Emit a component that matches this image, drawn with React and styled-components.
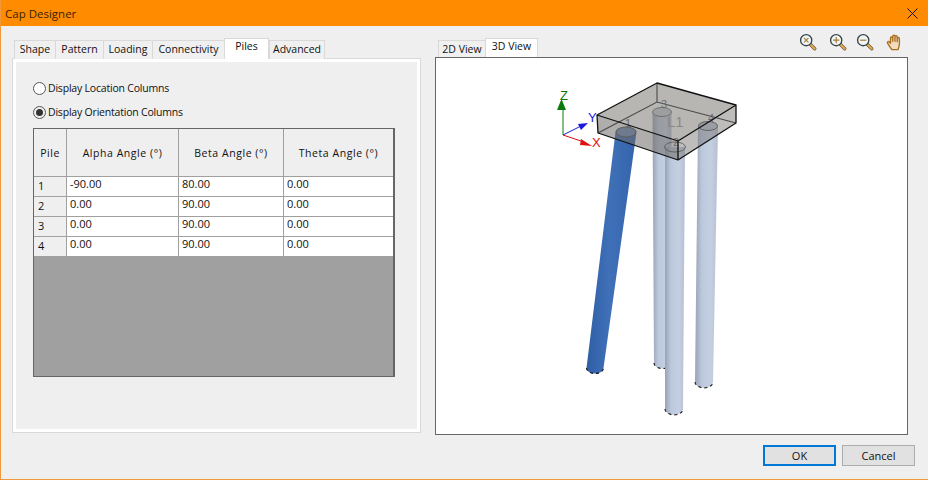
import React from "react";
import styled, { createGlobalStyle } from "styled-components";

const Global = createGlobalStyle`
  html, body { margin: 0; padding: 0; background: #efefef; }
  body { font-family: "Open Sans", "Noto Sans", "Liberation Sans", sans-serif; font-size: 11px; color: #111; }
`;

const Win = styled.div`
  width: 928px; height: 480px; box-sizing: border-box; overflow: hidden;
  background: #efefef;
  border: 1px solid #f0983a; border-top: 0; border-right: 0;
  display: flex; flex-direction: column;
`;
const TitleBar = styled.header`
  height: 26px; flex: none; margin-left: -1px; background: #ff8c00;
  display: flex; align-items: center; justify-content: space-between;
  padding: 0 10px 0 5px; font-size: 11.5px; color: #3a2200;
`;
const CloseButton = styled.svg`width: 11px; height: 11px; display: block;`;
const Body = styled.div`
  flex: 1; display: flex; gap: 14px; padding: 11px 20px 0 11px; min-height: 0;
`;
const LeftCol = styled.section`width: 409px; flex: none; display: flex; flex-direction: column;`;
const RightCol = styled.section`width: 473px; flex: none; display: flex; flex-direction: column;`;
const TabRow = styled.div`
  height: 21px; flex: none; display: flex; align-items: flex-end; padding-left: ${p => p.$pad}px;
`;
const Tab = styled.div`
  width: ${p => p.$w}px; box-sizing: border-box; flex: none; text-align: center; font-size: 10.5px;
  height: ${p => p.$active ? 21 : 19}px; line-height: ${p => p.$active ? 15 : 16}px;
  background: ${p => p.$active ? "#fff" : "#f0f0f0"};
  border: 1px solid #d9d9d9; border-bottom: 0;
  ${p => p.$active ? "" : "border-right-width: 0;"}
  &:last-child { border-right-width: 1px; }
  margin-bottom: -1px; position: relative; z-index: ${p => p.$active ? 2 : 1};
`;
const Panel = styled.div`
  width: 409px; height: 375px; box-sizing: border-box; flex: none;
  border: 1px solid #d9d9d9; outline: 3px solid #fff; outline-offset: -4px;
  padding: 17px 12px 0 20px; background: #efefef;
`;
const RadioRow = styled.label`
  display: flex; align-items: center; gap: 2px; height: 24px; line-height: 24px;
  font-size: 10.5px; letter-spacing: -.2px;
`;
const RadioDot = styled.span`
  width: 13px; height: 13px; border-radius: 50%; box-sizing: border-box; flex: none;
  border: 1px solid #555; background: ${p => p.$on ? "#efefef" : "#fff"};
  display: flex; align-items: center; justify-content: center;
  &::after { content: ""; width: 7px; height: 7px; border-radius: 50%; background: ${p => p.$on ? "#333" : "transparent"}; }
`;
const Grid = styled.div`
  margin-top: 4px; width: 362px; height: 249px; box-sizing: border-box;
  border: 1px solid #666; border-right-width: 2px; background: #a0a0a0;
`;
const GRow = styled.div`
  display: grid; grid-template-columns: 33px 112px 105px 109px; height: ${p => p.$h}px; box-sizing: border-box;
  border-bottom: 1px solid #a0a0a0;
`;
const HCell = styled.div`
  background: #efefef; border-right: 1px solid #a0a0a0;
  display: flex; align-items: center; justify-content: center; font-size: 10.5px; letter-spacing: .55px;
  &:last-child { border-right: 0; }
`;
const IdCell = styled.div`
  background: #efefef; border-right: 1px solid #a0a0a0; padding-left: 4px; line-height: 17px;
`;
const Cell = styled.div`
  background: #fff; border-right: 1px solid #a0a0a0; padding-left: 3px; line-height: 14px;
  &:last-child { border-right: 0; }
`;
const ViewHead = styled.div`display: flex; justify-content: space-between; flex: none; height: 21px;`;
const Tools = styled.div`display: flex; align-items: flex-start; margin-top: -4px; padding-right: 4px;`;
const ToolIcon = styled.svg`width: 18px; height: 18px; display: block; margin-left: ${p => p.$ml}px;`;
const View = styled.div`
  width: 473px; height: 378px; box-sizing: border-box; flex: none; border: 1px solid #666; background: #fff;
  position: relative; z-index: 3; margin-top: -1px;
`;
const Scene = styled.svg`display: block; width: 471px; height: 376px;`;
const Footer = styled.footer`
  flex: none; display: flex; justify-content: flex-end; gap: 6px; padding: 0 13px 13px 0; height: 34px; box-sizing: border-box; align-items: flex-start; margin-top: 11px;
`;
const Btn = styled.button`
  width: 73px; height: 21px; box-sizing: border-box; background: #e1e1e1; padding: 0;
  border: ${p => p.$primary ? "2px solid #0078d7" : "1px solid #adadad"};
  font: inherit; color: #111; font-size: 11px;
`;

const rows = [["1","-90.00","80.00","0.00"],["2","0.00","90.00","0.00"],["3","0.00","90.00","0.00"],["4","0.00","90.00","0.00"]];

const Magnifier = ({ kind, ml }) => (
  <ToolIcon viewBox="0 0 20 20" $ml={ml}>
    <line x1="12.5" y1="12.5" x2="17.5" y2="17.5" stroke="#6b5a3a" strokeWidth="3.6" strokeLinecap="round" />
    <line x1="12.5" y1="12.5" x2="17.5" y2="17.5" stroke="#e0a850" strokeWidth="2.2" strokeLinecap="round" />
    <circle cx="8" cy="8" r="6.2" fill="#eef6f6" stroke="#38424a" strokeWidth="1.5" />
    {kind === "plus" && <path d="M8 4.5v7M4.5 8h7" stroke="#a87a30" strokeWidth="1.3" />}
    {kind === "minus" && <path d="M4.5 8h7" stroke="#a87a30" strokeWidth="1.3" />}
    {kind === "x" && <path d="M5.5 5.5l5 5M10.500 5.500l-5 5" stroke="#a87a30" strokeWidth="1.2" />}
  </ToolIcon>
);

const Hand = () => (
  <ToolIcon viewBox="0 0 20 20" $ml={12}>
    <path d="M5 16.500C4 14.500 1.500 11.500 1.500 10.500c0-1.200 1.500-1.300 2.300-.5L5 11.300V5.500c0-1.500 2-1.500 2.200 0L7.500 9V3.500c0-1.600 2.300-1.600 2.400 0L10 9V4c0-1.500 2.300-1.500 2.400 0l.1 5.500V6c0-1.400 2.200-1.400 2.300 0 .3 4 .4 7.500-.8 10.500-.3.800-.6 2-.6 2H6.500c-.3-.8-1-1.300-1.500-2z" fill="#f2dcc0" stroke="#a8701f" strokeWidth="1.500" strokeLinejoin="round" />
    <path d="M7.500 8.500v2M10 8.500v2M12.500 8.500v2" stroke="#c49454" strokeWidth=".8" />
  </ToolIcon>
);

const Pile = ({ x1, y1, x2, y2, w1, w2, grad, cap }) => {
  const a = w1 / 2;
  const b = w2 / 2;
  const d = `M${x1 - a} ${y1} L${x2 - b} ${y2} A${b} ${b * 0.65} 0 0 0 ${x2 + b} ${y2} L${x1 + a} ${y1} Z`;
  return (
    <g>
      <path d={d} fill={`url(#${grad})`} />
      <path d={`M${x2 - b} ${y2} A${b} ${b * 0.65} 0 0 0 ${x2 + b} ${y2}`} fill="none" stroke="#111" strokeWidth="1.100" strokeDasharray="3 3" />
      {cap && <ellipse cx={x1} cy={y1} rx={a} ry={a * 0.5} fill={cap} />}
    </g>
  );
};

const Model = () => (
  <Scene viewBox="436 58 471 376">
    <defs>
      <linearGradient id="gp" x1="0" x2="1" y1="0" y2="0">
        <stop offset="0" stopColor="#98a3b6" />
        <stop offset=".3" stopColor="#bcc8dc" />
        <stop offset=".7" stopColor="#c4d0e2" />
        <stop offset="1" stopColor="#b4bfd2" />
      </linearGradient>
      <linearGradient id="gb" x1="0" x2="1" y1="0" y2="0">
        <stop offset="0" stopColor="#2f5ea4" />
        <stop offset=".45" stopColor="#3f70b8" />
        <stop offset="1" stopColor="#3564ac" />
      </linearGradient>
    </defs>
    <Pile x1={662} y1={112} x2={662.500} y2={363} w1={19} w2={17} grad="gp" cap="#c6cdd8" />
    <Pile x1={708} y1={126} x2={704} y2={382} w1={20} w2={18} grad="gp" cap="#b8c2d2" />
    <Pile x1={626} y1={132} x2={595} y2={368} w1={21} w2={17} grad="gb" cap="#6f8cb8" />
    <Pile x1={675} y1={147} x2={674} y2={409} w1={20} w2={18} grad="gp" />

    <path d="M597 115L657 83L736 105L678 141Z" fill="#77736e" fillOpacity=".52" />
    <path d="M597 115L678 141L678 160L598 133Z" fill="#6f6c68" fillOpacity=".55" />
    <path d="M678 141L736 105L736 123L678 160Z" fill="#7a7672" fillOpacity=".48" />
    <path d="M657 83L657 102M598 133L657 102L736 123" fill="none" stroke="#4a4a4a" strokeWidth="1.100" />
    <ellipse cx="626" cy="132" rx="10" ry="5" fill="none" stroke="#555" strokeWidth=".8" />
    <ellipse cx="662" cy="112" rx="9.500" ry="4.500" fill="none" stroke="#666" strokeWidth=".8" />
    <ellipse cx="675" cy="147" rx="10.500" ry="5" fill="none" stroke="#555" strokeWidth=".8" />
    <ellipse cx="708" cy="126" rx="9.500" ry="4.500" fill="none" stroke="#555" strokeWidth=".8" />
    <g fontFamily="'Liberation Sans', sans-serif" fontSize="11" fill="#6a6a6a">
      <text x="625" y="127">1</text>
      <text x="661" y="108">3</text>
      <text x="673" y="146">2</text>
      <text x="708" y="122">4</text>
      <text x="667" y="127" fontSize="15" fontWeight="300" fill="#888">L1</text>
    </g>
    <path d="M597 115L657 83L736 105L678 141ZM597 115L598 133L678 160L736 123L736 105M678 141L678 160" fill="none" stroke="#111" strokeWidth="1.300" strokeLinejoin="round" />

    <path d="M563 135V108" stroke="#0a7a0a" strokeWidth="1" />
    <path d="M561.500 99L557 110H566Z" fill="#0a7a0a" />
    <path d="M563 135L583 125" stroke="#1a1ae0" strokeWidth="1" />
    <path d="M588 123L578 124L581 130Z" fill="#1a1ae0" />
    <path d="M563 135L584 142" stroke="#e01010" strokeWidth="1" />
    <path d="M592 146L581 139L580 145Z" fill="#e01010" />
    <g fontFamily="'Liberation Sans', sans-serif" fontSize="13">
      <text x="560" y="100" fill="#0a7a0a">Z</text>
      <text x="588" y="122" fill="#1a1ae0">Y</text>
      <text x="592" y="147" fill="#e01010">X</text>
    </g>
  </Scene>
);

export default function App() {
  return (
    <>
      <Global />
      <Win>
        <TitleBar>
          <span>Cap Designer</span>
          <CloseButton viewBox="0 0 11 11"><path d="M.5.5l10 10M10.500.5l-10 10" stroke="#111" strokeWidth="1" /></CloseButton>
        </TitleBar>
        <Body>
          <LeftCol>
            <TabRow $pad={2}>
              <Tab $w={41}>Shape</Tab>
              <Tab $w={48}>Pattern</Tab>
              <Tab $w={49}>Loading</Tab>
              <Tab $w={72}>Connectivity</Tab>
              <Tab $w={45} $active>Piles</Tab>
              <Tab $w={56}>Advanced</Tab>
            </TabRow>
            <Panel>
              <RadioRow><RadioDot />Display Location Columns</RadioRow>
              <RadioRow><RadioDot $on />Display Orientation Columns</RadioRow>
              <Grid>
                <GRow $h={48}>
                  <HCell>Pile</HCell><HCell>Alpha Angle (°)</HCell><HCell>Beta Angle (°)</HCell><HCell>Theta Angle (°)</HCell>
                </GRow>
                {rows.map(r => (
                  <GRow $h={20} key={r[0]}>
                    <IdCell>{r[0]}</IdCell><Cell>{r[1]}</Cell><Cell>{r[2]}</Cell><Cell>{r[3]}</Cell>
                  </GRow>
                ))}
              </Grid>
            </Panel>
          </LeftCol>
          <RightCol>
            <ViewHead>
              <TabRow $pad={3}>
                <Tab $w={47}>2D View</Tab>
                <Tab $w={53} $active>3D View</Tab>
              </TabRow>
              <Tools>
                <Magnifier kind="x" ml={0} />
                <Magnifier kind="plus" ml={12} />
                <Magnifier kind="minus" ml={9} />
                <Hand />
              </Tools>
            </ViewHead>
            <View><Model /></View>
          </RightCol>
        </Body>
        <Footer>
          <Btn $primary>OK</Btn>
          <Btn>Cancel</Btn>
        </Footer>
      </Win>
    </>
  );
}
